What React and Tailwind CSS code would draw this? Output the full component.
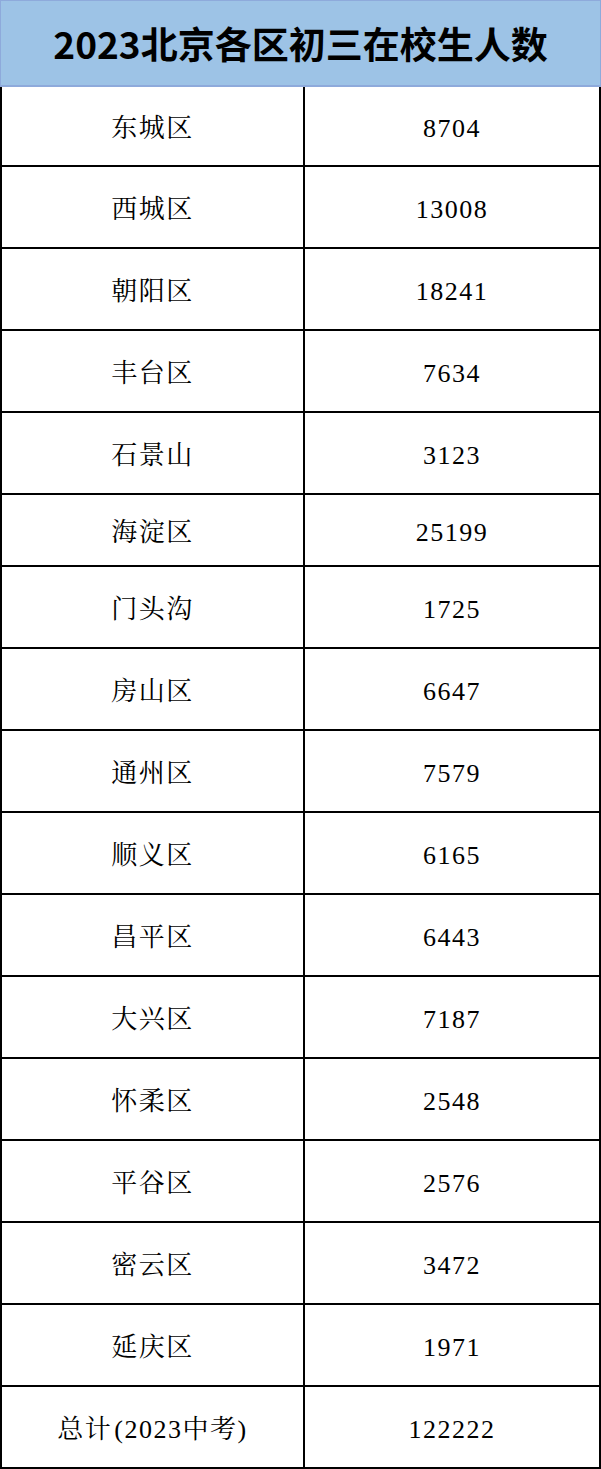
const rows = [
  ["东城区", "8704", "h-[80px]"],
  ["西城区", "13008", "h-[82px]"],
  ["朝阳区", "18241", "h-[82px]"],
  ["丰台区", "7634", "h-[82px]"],
  ["石景山", "3123", "h-[82px]"],
  ["海淀区", "25199", "h-[72px]"],
  ["门头沟", "1725", "h-[82px]"],
  ["房山区", "6647", "h-[82px]"],
  ["通州区", "7579", "h-[82px]"],
  ["顺义区", "6165", "h-[82px]"],
  ["昌平区", "6443", "h-[82px]"],
  ["大兴区", "7187", "h-[82px]"],
  ["怀柔区", "2548", "h-[82px]"],
  ["平谷区", "2576", "h-[82px]"],
  ["密云区", "3472", "h-[82px]"],
  ["延庆区", "1971", "h-[82px]"],
  ["总计(2023中考)", "122222", "h-[82px]"],
];

const cellFont =
  "font-['Liberation_Serif','Noto_Serif_CJK_SC','Noto_Sans_CJK_SC',serif] text-[26px] tracking-[1.5px] text-black pt-[5px]";

export default function App() {
  return (
    <div className="w-[601px] bg-white">
      <div className="h-[87px] bg-[#9dc3e6] border border-b-2 border-[#8eaadb] flex items-center justify-center">
        <h1 className="font-['Noto_Sans_CJK_SC',sans-serif] font-bold text-[37px] leading-none text-black">
          2023北京各区初三在校生人数
        </h1>
      </div>
      <div className="border-x-2 border-black">
        {rows.map(([name, num, h]) => (
          <div key={name} className={`flex border-b-2 border-black ${h}`}>
            <div className={`w-[303px] border-r-2 border-black flex items-center justify-center ${cellFont}`}>
              {name.startsWith("总计") ? (
                <span>
                  总计<span className="ml-[2px]">(2023中考)</span>
                </span>
              ) : (
                name
              )}
            </div>
            <div className={`flex-1 flex items-center justify-center ${cellFont}`}>
              {num}
            </div>
          </div>
        ))}
      </div>
    </div>
  );
}
